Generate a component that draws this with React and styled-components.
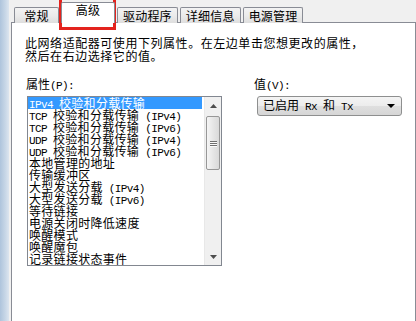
import styled, { createGlobalStyle } from "styled-components";

const GlobalStyle = createGlobalStyle`
  html, body {
    margin: 0;
    padding: 0;
    background: #f0f0f0;
    overflow: hidden;
  }
  * {
    box-sizing: border-box;
  }
`;

const CJK = `"Noto Sans CJK SC", "Noto Sans", sans-serif`;

const tabs = ["常规", "高级", "驱动程序", "详细信息", "电源管理"];

const properties = [
  "IPv4 校验和分载传输",
  "TCP 校验和分载传输 (IPv4)",
  "TCP 校验和分载传输 (IPv6)",
  "UDP 校验和分载传输 (IPv4)",
  "UDP 校验和分载传输 (IPv6)",
  "本地管理的地址",
  "传输缓冲区",
  "大型发送分载 (IPv4)",
  "大型发送分载 (IPv6)",
  "等待链接",
  "电源关闭时降低速度",
  "唤醒模式",
  "唤醒魔包",
  "记录链接状态事件",
];

// Latin runs are drawn in a narrow mono face, like SimSun's half-width glyphs
const mixed = (text) =>
  text.split(/([\x20-\x7e]+)/).map((part, i) =>
    /^[\x20-\x7e]+$/.test(part) ? <Lat key={i}>{part}</Lat> : part
  );

const App = () => {
  return (
    <Window>
      <GlobalStyle />
      <FrameEdge />
      <Main>
        <TabStrip>
          {tabs.map((t) => (
            <Tab key={t} $active={t === "高级"}>
              {t}
            </Tab>
          ))}
        </TabStrip>
        <Panel>
          <Intro>
            此网络适配器可使用下列属性。在左边单击您想更改的属性，
            <br />
            然后在右边选择它的值。
          </Intro>
          <Fields>
            <div>
              <Label>{mixed("属性(P):")}</Label>
              <ListBox>
                <Items>
                  {properties.map((p, i) => (
                    <Item key={p} $selected={i === 0}>
                      {mixed(p)}
                    </Item>
                  ))}
                </Items>
                <ScrollBar>
                  <ArrowBtn>
                    <svg width="7" height="4" viewBox="0 0 7 4">
                      <path d="M0 4 L3.5 0 L7 4 Z" fill="#4d4d4d" />
                    </svg>
                  </ArrowBtn>
                  <Track>
                    <Thumb>
                      <Grip />
                      <Grip />
                      <Grip />
                    </Thumb>
                  </Track>
                  <ArrowBtn>
                    <svg width="7" height="4" viewBox="0 0 7 4">
                      <path d="M0 0 L3.5 4 L7 0 Z" fill="#4d4d4d" />
                    </svg>
                  </ArrowBtn>
                </ScrollBar>
              </ListBox>
            </div>
            <div>
              <Label>{mixed("值(V):")}</Label>
              <Combo>
                <span>{mixed("已启用 Rx 和 Tx")}</span>
                <svg width="8" height="4" viewBox="0 0 8 4">
                  <path d="M0 0 L8 0 L4 4 Z" fill="#000" />
                </svg>
              </Combo>
            </div>
          </Fields>
        </Panel>
      </Main>
      <Highlight />
    </Window>
  );
};

export default App;

const Window = styled.div`
  position: relative;
  display: flex;
  width: 416px;
  height: 321px;
  overflow: hidden;
  background: #f0f0f0;
  font-family: ${CJK};
  color: #000;
`;

const FrameEdge = styled.div`
  width: 9px;
  flex: none;
  background: linear-gradient(to right, #aec4dc, #c8d7e7 60%, #dce5ef);
`;

const Main = styled.div`
  flex: 1;
  display: flex;
  flex-direction: column;
  padding: 0 2px 0 2px;
`;

const TabStrip = styled.div`
  display: flex;
  align-items: flex-end;
  height: 23px;
  padding-left: 2px;
  margin-bottom: -1px;
  position: relative;
  z-index: 1;
`;

const Tab = styled.div`
  min-width: 45px;
  padding: 0 5px;
  display: flex;
  align-items: center;
  justify-content: center;
  font-size: 12px;
  line-height: 12px;
  letter-spacing: 0.2px;
  border: 1px solid #898c95;
  border-bottom: none;
  height: ${(p) => (p.$active ? "21px" : "16px")};
  margin: 0 1px;
  padding-bottom: ${(p) => (p.$active ? "6px" : "0")};
  background: ${(p) =>
    p.$active ? "#fff" : "linear-gradient(#f3f3f3, #ebebeb 50%, #dedede)"};
  border-radius: 2px 2px 0 0;
  ${(p) => p.$active && "min-width: 54px;"}
`;

const Panel = styled.div`
  flex: 1;
  background: #fff;
  border: 1px solid #898c95;
  border-bottom: none;
  padding: 13px 13px 0 13px;
`;

const Intro = styled.div`
  font-size: 12px;
  line-height: 13px;
  letter-spacing: 0.55px;
`;

const Fields = styled.div`
  display: grid;
  grid-template-columns: 228px 1fr;
  margin-top: 15px;
`;

const Label = styled.div`
  font-size: 12px;
  line-height: 13px;
  height: 13px;
  margin-bottom: 6px;
  margin-left: 1px;
`;

const Lat = styled.span`
  font-family: "Liberation Mono", monospace;
  font-size: 11px;
  letter-spacing: -0.6px;
  white-space: pre;
`;

const ListBox = styled.div`
  display: flex;
  width: 195px;
  height: 170px;
  margin-left: 2px;
  border: 1px solid #828790;
  background: #fff;
`;

const Items = styled.div`
  flex: 1;
  padding-right: 2px;
`;

const Item = styled.div`
  height: 12px;
  font-size: 12px;
  line-height: 12px;
  letter-spacing: 0.3px;
  padding-left: 1px;
  white-space: nowrap;
  background: ${(p) => (p.$selected ? "#3399ff" : "transparent")};
  color: ${(p) => (p.$selected ? "#fff" : "#000")};
`;

const ScrollBar = styled.div`
  width: 17px;
  display: flex;
  flex-direction: column;
  background: #f0f0f0;
  border-left: 1px solid #e8e8e8;
`;

const ArrowBtn = styled.div`
  height: 17px;
  display: flex;
  align-items: center;
  justify-content: center;
`;

const Track = styled.div`
  flex: 1;
  padding: 2px 1px 0 1px;
`;

const Thumb = styled.div`
  height: 54px;
  border: 1px solid #979797;
  border-radius: 2px;
  background: linear-gradient(to right, #f5f5f5, #e6e6e6 50%, #d9d9d9);
  display: flex;
  flex-direction: column;
  align-items: center;
  justify-content: center;
  gap: 1px;
`;

const Grip = styled.div`
  width: 7px;
  height: 1px;
  background: #6f6f6f;
  box-shadow: 0 1px 0 #fafafa;
`;

const Combo = styled.div`
  display: flex;
  align-items: center;
  justify-content: space-between;
  width: 145px;
  height: 20px;
  margin-left: 4px;
  padding: 0 6px 0 5px;
  border: 1px solid #8e8f8f;
  border-radius: 3px;
  background: linear-gradient(#f4f4f4, #ececec 50%, #dfdfdf 50%, #d6d6d6);
  font-size: 12px;
  line-height: 12px;
`;

const Highlight = styled.div`
  position: absolute;
  left: 59px;
  top: -3px;
  width: 57px;
  height: 33px;
  border: 3px solid #e3231e;
  pointer-events: none;
`;
